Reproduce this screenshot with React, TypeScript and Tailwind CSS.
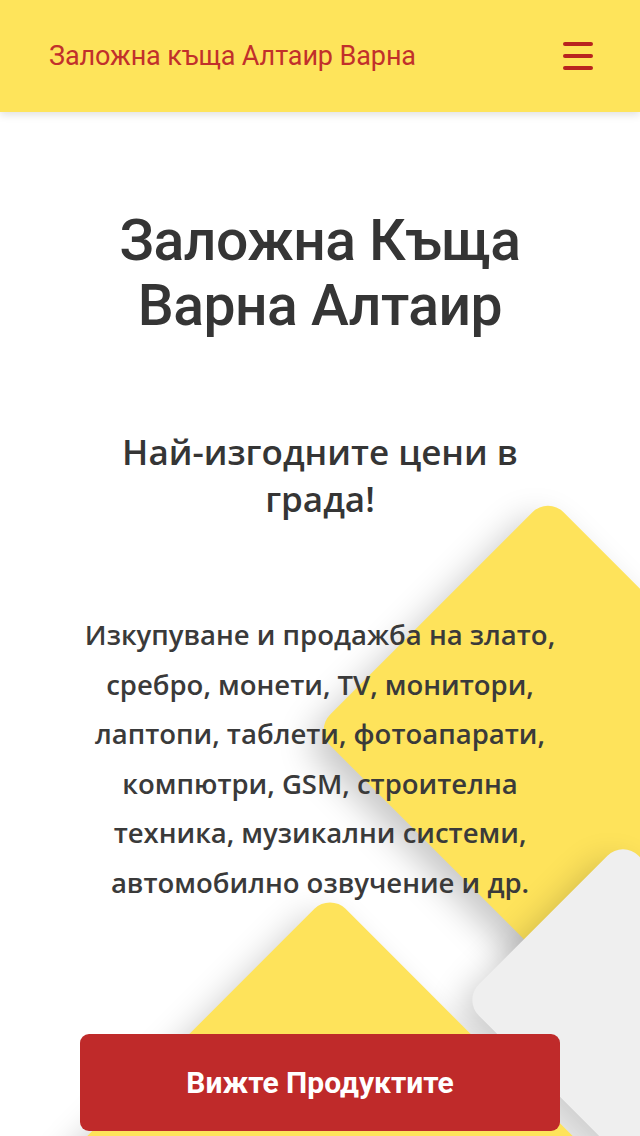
import React from "react";

const src = { fontFamily: "Roboto, 'Noto Sans', sans-serif" };
const open = { fontFamily: "'Open Sans', 'Noto Sans', sans-serif" };

export default function App() {
  return (
    <div className="relative min-h-[1136px] overflow-hidden bg-white">
      {/* decorative diamonds */}
      <div className="pointer-events-none absolute inset-0 z-0">
        <div className="absolute left-[383px] top-[565px] h-[330px] w-[330px] rotate-45 rounded-[22px] bg-[#fee35b] shadow-[0_18px_34px_rgba(0,0,0,0.22)]" />
        <div className="absolute left-[510px] top-[887px] h-[226px] w-[226px] rotate-45 rounded-[22px] bg-[#efefef] shadow-[0_18px_34px_rgba(0,0,0,0.2)]" />
        <div className="absolute left-[140px] top-[972px] h-[380px] w-[380px] rotate-45 rounded-[22px] bg-[#fee35b] shadow-[0_18px_34px_rgba(0,0,0,0.2)]" />
      </div>

      <header className="relative z-20 flex h-[112px] items-center justify-between bg-[#fee45b] pl-[49px] pr-[47px] shadow-[0_3px_8px_rgba(0,0,0,0.12)]">
        <span className="text-[27px] leading-none tracking-[-0.1px] text-[#c1302b]" style={src}>
          Заложна къща Алтаир Варна
        </span>
        <svg width="30" height="28" viewBox="0 0 30 28" aria-hidden>
          <rect x="0" y="0" width="30" height="4" rx="2" fill="#b8241e" />
          <rect x="0" y="12" width="30" height="4" rx="2" fill="#b8241e" />
          <rect x="0" y="24" width="30" height="4" rx="2" fill="#b8241e" />
        </svg>
      </header>

      <main className="relative z-10 flex flex-col items-center px-[80px] text-center text-[#353535]">
        <h1 className="mt-[96px] text-[57px] font-medium leading-[65px] tracking-[-0.5px]" style={src}>
          Заложна Къща
          <br />
          Варна Алтаир
        </h1>
        <h2 className="mt-[90px] w-[440px] text-[35px] font-semibold leading-[47px]" style={open}>
          Най-изгодните цени в града!
        </h2>
        <p className="mt-[88px] text-[27.5px] font-semibold leading-[49.6px] text-[#3a3a3a]" style={open}>
          Изкупуване и продажба на злато, сребро, монети, TV, монитори, лаптопи, таблети, фотоапарати, компютри, GSM, строителна техника, музикални системи, автомобилно озвучение и др.
        </p>
        <button className="mt-[126px] flex h-[97px] w-full shrink-0 items-center justify-center rounded-[9px] bg-[#bf2a2a] text-[30px] font-bold text-white" style={src}>
          Вижте Продуктите
        </button>
      </main>
    </div>
  );
}
